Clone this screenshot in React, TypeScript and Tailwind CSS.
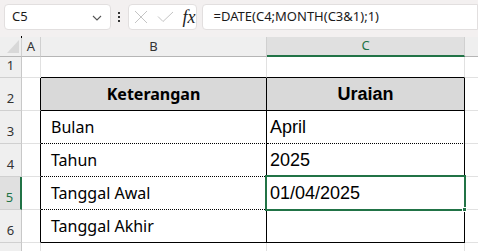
import React from "react";

function Toolbar() {
  return (
    <div className="flex h-[37px] items-start bg-[#f3f0f0] pl-[4px] pt-[4px]">
      <div className="flex h-[26px] w-[115px] items-center justify-between rounded-[4px] border border-[#e2dfdf] bg-white pl-[7px] pr-[8px]">
        <span className="text-[13px] text-[#1a1a1a]">C5</span>
        <svg width="10" height="6" viewBox="0 0 10 6" className="mt-[1px]">
          <path d="M1 1 L5 5 L9 1" fill="none" stroke="#555" strokeWidth="1.1" />
        </svg>
      </div>
      <div className="flex h-[26px] w-[18px] flex-col items-center justify-center gap-[2px]">
        <div className="h-[2px] w-[2px] bg-[#333]" />
        <div className="h-[2px] w-[2px] bg-[#333]" />
        <div className="h-[2px] w-[2px] bg-[#333]" />
      </div>
      <div className="flex h-[26px] w-[73px] items-center rounded-[4px] border border-[#e2dfdf] bg-white pl-[4px]">
        <svg width="14" height="14" viewBox="0 0 14 14" className="ml-[1px]">
          <path d="M1 1 L13 13 M13 1 L1 13" fill="none" stroke="#c4c4c4" strokeWidth="1" />
        </svg>
        <svg width="17" height="12" viewBox="0 0 17 12" className="ml-[9px]">
          <path d="M1 5.5 L6 10.5 L16 1" fill="none" stroke="#c4c4c4" strokeWidth="1" />
        </svg>
        <span
          className="ml-[9px] text-[18px] italic leading-none text-[#222]"
          style={{ fontFamily: "'Liberation Serif', serif" }}
        >
          fx
        </span>
      </div>
      <div className="ml-[5px] flex h-[26px] w-[300px] items-center rounded-l-[4px] border border-[#e2dfdf] bg-white pl-[11px]">
        <span className="text-[13px] text-[#1a1a1a]">=DATE(C4;MONTH(C3&amp;1);1)</span>
      </div>
    </div>
  );
}

type Row = {
  n: string;
  b: string;
  c: string;
  kind: "plain" | "head" | "body";
  bottom: "grey" | "solid" | "dotted";
};

const rows: Row[] = [
  { n: "1", b: "", c: "", kind: "plain", bottom: "solid" },
  { n: "2", b: "Keterangan", c: "Uraian", kind: "head", bottom: "solid" },
  { n: "3", b: "Bulan", c: "April", kind: "body", bottom: "dotted" },
  { n: "4", b: "Tahun", c: "2025", kind: "body", bottom: "dotted" },
  { n: "5", b: "Tanggal Awal", c: "01/04/2025", kind: "body", bottom: "dotted" },
  { n: "6", b: "Tanggal Akhir", c: "", kind: "body", bottom: "solid" },
  { n: "7", b: "", c: "", kind: "plain", bottom: "grey" },
];

function bottomClass(b: Row["bottom"]) {
  if (b === "solid") return "border-b border-b-black";
  if (b === "dotted") return "border-b [border-bottom-style:dotted] border-b-black";
  return "border-b border-b-[#e1e1e1]";
}

export default function App() {
  return (
    <div
      className="relative h-[251px] w-[478px] overflow-hidden bg-white"
      style={{ fontFamily: "'Noto Sans', sans-serif" }}
    >
      <Toolbar />
      <div className="grid grid-cols-[22px_19px_226px_198px_1fr] grid-rows-[20px_21px_33px_33px_33px_33px_33px_33px]">
        <div className="relative border-b border-r border-b-[#b5b5b5] border-r-[#d0d0d0] bg-[#efefef]">
          <svg width="12" height="13" viewBox="0 0 12 13" className="absolute left-[7px] top-[3px]">
            <path d="M12 0 L12 13 L0 13 Z" fill="#d8d8d8" />
          </svg>
        </div>
        <div className="flex items-center justify-center border-b border-r border-b-[#b5b5b5] border-r-[#d0d0d0] bg-[#efefef] text-[13px] text-[#333]">
          A
        </div>
        <div className="flex items-center justify-center border-b border-r border-b-[#b5b5b5] border-r-[#d0d0d0] bg-[#efefef] text-[13px] text-[#333]">
          B
        </div>
        <div className="flex items-center justify-center border-b-2 border-r border-b-[#217346] border-r-[#d0d0d0] bg-[#e0e0e0] text-[13px] text-[#217346]">
          C
        </div>
        <div className="border-b border-b-[#b5b5b5] bg-[#efefef]" />

        {rows.map((r) => {
          const selected = r.n === "5";
          const inTable = r.kind !== "plain";
          const rightBlack = inTable ? "border-r border-r-black" : "border-r border-r-[#e1e1e1]";
          const bcBottom = r.n === "7" ? bottomClass("grey") : bottomClass(r.bottom);
          return (
            <React.Fragment key={r.n}>
              <div
                className={
                  selected
                    ? "flex items-end justify-center border-b border-r-2 border-b-[#d0d0d0] border-r-[#217346] bg-[#e0e0e0] pb-[3px] pr-[1px] text-[13px] leading-[18px] text-[#217346]"
                    : "flex items-end justify-center border-b border-r border-b-[#d0d0d0] border-r-[#c8c8c8] bg-[#efefef] pb-[3px] text-[13px] leading-[18px] text-[#333]"
                }
              >
                {r.n}
              </div>
              <div className={`border-b border-b-[#e1e1e1] ${rightBlack}`} />
              <div
                className={`flex items-center ${bcBottom} ${rightBlack} ${
                  r.kind === "head" ? "justify-center bg-[#d9d9d9]" : "pl-[10px]"
                }`}
              >
                <span
                  className={`text-[16px] text-black ${r.kind === "head" ? "font-bold" : ""}`}
                >
                  {r.b}
                </span>
              </div>
              <div
                className={`flex items-center ${bcBottom} ${rightBlack} ${
                  r.kind === "head" ? "justify-center bg-[#d9d9d9]" : "pl-[3px]"
                }`}
              >
                <span
                  className={`text-[18px] text-black ${r.kind === "head" ? "font-bold" : ""}`}
                  style={{ fontFamily: "'Liberation Sans', Arial, sans-serif" }}
                >
                  {r.c}
                </span>
              </div>
              <div className="border-b border-b-[#e1e1e1]" />
            </React.Fragment>
          );
        })}
      </div>

      <div className="absolute left-[265px] top-[175px] h-[36px] w-[201px] border-2 border-[#217346]" />
      <div className="absolute left-[462px] top-[207px] h-[5px] w-[5px] border border-white bg-[#217346]" />
      <div className="absolute left-[21px] top-[36px] h-[2px] w-[1px] bg-black" />
    </div>
  );
}
